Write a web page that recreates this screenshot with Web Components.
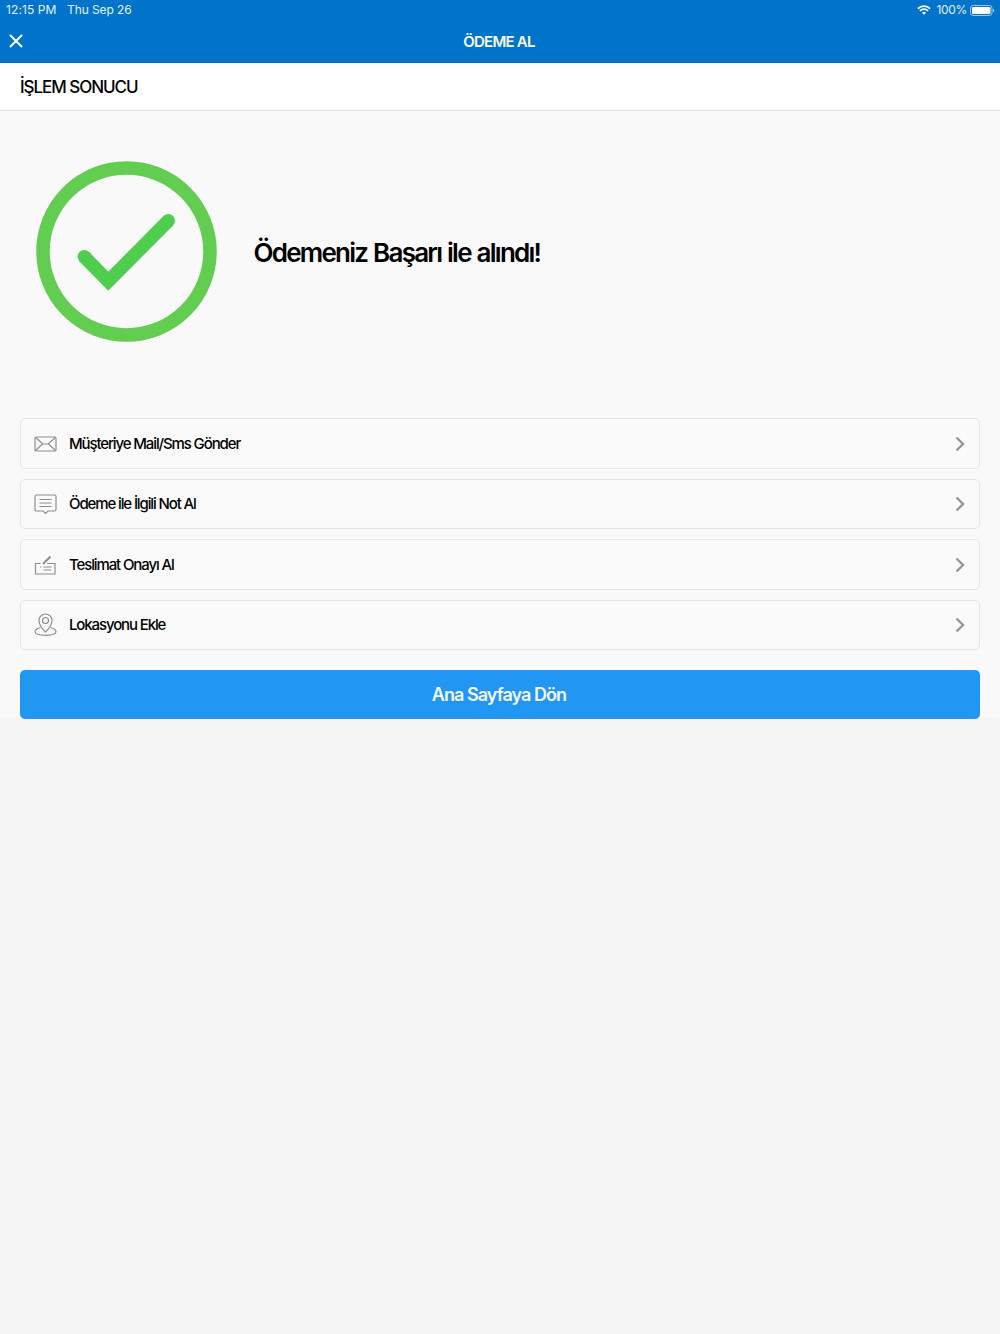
<!DOCTYPE html>
<html lang="tr">
<head>
<meta charset="utf-8">
<title>Ödeme Al</title>
<style>
  html, body { margin: 0; padding: 0; }
  body { background: #f5f5f5; font-family: Inter, "Liberation Sans", sans-serif; width: 1000px; height: 1334px; overflow: hidden; }
</style>
</head>
<body>
<top-bar title="ÖDEME AL"></top-bar>
<section-head>İŞLEM SONUCU</section-head>
<result-panel>
  <success-banner>Ödemeniz Başarı ile alındı!</success-banner>
  <action-list>
    <action-row icon="mail">Müşteriye Mail/Sms Gönder</action-row>
    <action-row icon="note">Ödeme ile İlgili Not Al</action-row>
    <action-row icon="sign">Teslimat Onayı Al</action-row>
    <action-row icon="pin">Lokasyonu Ekle</action-row>
  </action-list>
  <primary-button>Ana Sayfaya Dön</primary-button>
</result-panel>

<script>
window.customElements.define('top-bar', class extends HTMLElement {
  constructor() {
    super()
    this.attachShadow({mode:"open"})
    this.shadowRoot.innerHTML = `
      <style>
        :host {
          display: block;
          height: 63px;
          background: #0074ca;
          color: #fff;
        }
        .status {
          height: 20px;
          display: flex;
          align-items: center;
          padding: 0 5px 0 6px;
          font: 400 12px/20px Inter, "Liberation Sans", sans-serif;
          letter-spacing: 0.1px;
          color: #e6f1fa;
        }
        .date { margin-left: 10.500px; letter-spacing: -0.1px; }
        .right { margin-left: auto; display: flex; align-items: center; }
        .right svg { display: block; }
        .pct { margin: 0 3px 0 5px; letter-spacing: -0.3px; }
        .nav {
          height: 43px;
          display: flex;
          align-items: center;
          justify-content: center;
          padding-right: 2px;
          position: relative;
          font: 600 15px/43px Inter, "Liberation Sans", sans-serif;
          letter-spacing: -0.75px;
        }
        .close { position: absolute; left: 9px; top: 14px; display: block; }
      </style>
      <div class="status">
        <span>12:15 PM</span><span class="date">Thu Sep 26</span>
        <span class="right">
          <svg width="14" height="10" viewBox="0 0 14 10" fill="none" stroke="#fff" stroke-width="1.8">
            <path d="M.9 3.6a8.6 8.6 0 0 1 12.2 0"/>
            <path d="M3 5.8a5.6 5.6 0 0 1 8 0"/>
            <path d="M7 9.8 5 7.7a2.9 2.9 0 0 1 4 0z" fill="#fff" stroke="none"/>
          </svg>
          <span class="pct">100%</span>
          <svg width="25" height="11" viewBox="0 0 25 11">
            <rect x=".5" y=".5" width="21.5" height="10" rx="2.6" fill="none" stroke="#9cc6e8"/>
            <rect x="2" y="2" width="18.5" height="7" rx="1.3" fill="#fff"/>
            <path d="M23 3.8c.8.2 1.3.9 1.3 1.7S23.800 7 23 7.200z" fill="#9cc6e8"/>
          </svg>
        </span>
      </div>
      <div class="nav">
        <svg class="close" width="14" height="14" viewBox="0 0 14 14" stroke="#fff" stroke-width="2" stroke-linecap="round">
          <path d="M1.500 1.500 12.500 12.500M12.500 1.500 1.500 12.500"/>
        </svg>
        <span id="title"></span>
      </div>
    `
  }

  connectedCallback() {
    this.shadowRoot.querySelector("#title").textContent = this.getAttribute('title')
  }
})

window.customElements.define('section-head', class extends HTMLElement {
  constructor() {
    super()
    this.attachShadow({mode:"open"})
    this.shadowRoot.innerHTML = `
      <style>
        :host {
          display: block;
          box-sizing: border-box;
          height: 48px;
          padding-left: 20px;
          background: #fff;
          border-bottom: 1.5px solid #e6e6e6;
          color: #000;
          font: 500 17px/48px Inter, "Liberation Sans", sans-serif;
          letter-spacing: -1.05px;
        }
      </style>
      <slot></slot>
    `
  }
})

window.customElements.define('result-panel', class extends HTMLElement {
  constructor() {
    super()
    this.attachShadow({mode:"open"})
    this.shadowRoot.innerHTML = `
      <style>
        :host {
          display: block;
          box-sizing: border-box;
          height: 607px;
          padding: 0 20px;
          background: #f9f9f9;
        }
      </style>
      <slot></slot>
    `
  }
})

window.customElements.define('success-banner', class extends HTMLElement {
  constructor() {
    super()
    this.attachShadow({mode:"open"})
    this.shadowRoot.innerHTML = `
      <style>
        :host {
          display: flex;
          align-items: center;
          height: 281px;
          margin-bottom: 26px;
          color: #000;
          font: 600 26px/32px Inter, "Liberation Sans", sans-serif;
          letter-spacing: -1.75px;
          word-spacing: 1px;
        }
        svg { display: block; margin: 0 36.500px 0 16px; flex: none; }
        .text { padding-top: 2px; }
      </style>
      <svg width="181" height="181" viewBox="0 0 181 181" fill="none">
        <circle cx="90.500" cy="90.500" r="83.500" stroke="#62cd50" stroke-width="13.500"/>
        <path d="M48.300 95.700 72.300 120.200 132.300 59.700" stroke="#4fce4e" stroke-width="13.400"/>
        <circle cx="48.300" cy="95.700" r="6.700" fill="#4fce4e"/>
        <circle cx="132.300" cy="59.700" r="6.700" fill="#4fce4e"/>
      </svg>
      <div class="text"><slot></slot></div>
    `
  }
})

window.customElements.define('action-list', class extends HTMLElement {
  constructor() {
    super()
    this.attachShadow({mode:"open"})
    this.shadowRoot.innerHTML = `
      <style>
        :host {
          display: flex;
          flex-direction: column;
          gap: 10px;
        }
      </style>
      <slot></slot>
    `
  }
})

const ACTION_ICONS = {
  mail: `<rect x="1" y="5" width="21" height="14" rx="1"/><path d="M1.500 5.500 9 12h5l7.500-6.500M1.500 18.500 8.500 12M21.500 18.500 14.500 12"/>`,
  note: `<path d="M2.500 3h18a1.500 1.500 0 0 1 1.500 1.500v13a1.500 1.500 0 0 1-1.500 1.500H14l-2.500 2.500L9 19H2.500A1.500 1.500 0 0 1 1 17.500v-13A1.500 1.500 0 0 1 2.500 3z"/><path d="M5.500 7.500h12M5.500 11h12M5.500 14.500h12"/>`,
  sign: `<path d="M6.500 10.500H1.500V21h19.500V10.500H13"/><path d="M6 14h1.500M9.500 14h8M9.500 17h8"/><path d="M16.500 3.500 9 11" stroke-width="2"/>`,
  pin: `<path d="M11.500 19s-6.500-6-6.500-11.500a6.500 6.500 0 0 1 13 0C18 13 11.500 19 11.500 19z"/><circle cx="11.500" cy="7.500" r="3"/><path d="M6.500 14.500C3.500 15.500 1 16.500 1 18.500c0 2.500 4.500 3.800 10.500 3.800S22 21 22 18.500c0-2-2.500-3-5.500-4"/>`
}

window.customElements.define('action-row', class extends HTMLElement {
  constructor() {
    super()
    this.attachShadow({mode:"open"})
    this.shadowRoot.innerHTML = `
      <style>
        :host {
          display: flex;
          align-items: center;
          box-sizing: border-box;
          height: 50.500px;
          padding: 1px 13px 0 13px;
          background: #fafafa;
          border: 1px solid #e6e6e6;
          border-radius: 5px;
          color: #000;
          font: 500 15px/20px Inter, "Liberation Sans", sans-serif;
          letter-spacing: -1.12px;
        }
        .icon { display: block; margin-right: 12px; flex: none; }
        .chev { display: block; margin-left: auto; }
      </style>
      <svg class="icon" width="23" height="24" viewBox="0 0 23 24" fill="none" stroke="#8c8c8c" stroke-width="1.150"></svg>
      <slot></slot>
      <svg class="chev" width="12" height="16" viewBox="0 0 12 16" fill="none" stroke="#969696" stroke-width="2.400">
        <path d="M2.500 1.500 9 8 2.500 14.500"/>
      </svg>
    `
  }

  connectedCallback() {
    this.shadowRoot.querySelector(".icon").innerHTML = ACTION_ICONS[this.getAttribute('icon')]
  }
})

window.customElements.define('primary-button', class extends HTMLElement {
  constructor() {
    super()
    this.attachShadow({mode:"open"})
    this.shadowRoot.innerHTML = `
      <style>
        :host {
          display: flex;
          align-items: center;
          justify-content: center;
          box-sizing: border-box;
          height: 48.500px;
          margin-top: 20px;
          padding: 1px 2px 0 0;
          background: #2196f3;
          border-radius: 5px;
          color: #f4f9fe;
          font: 600 18px/24px Inter, "Liberation Sans", sans-serif;
          letter-spacing: -0.95px;
        }
      </style>
      <slot></slot>
    `
  }
})
</script>
</body>
</html>
